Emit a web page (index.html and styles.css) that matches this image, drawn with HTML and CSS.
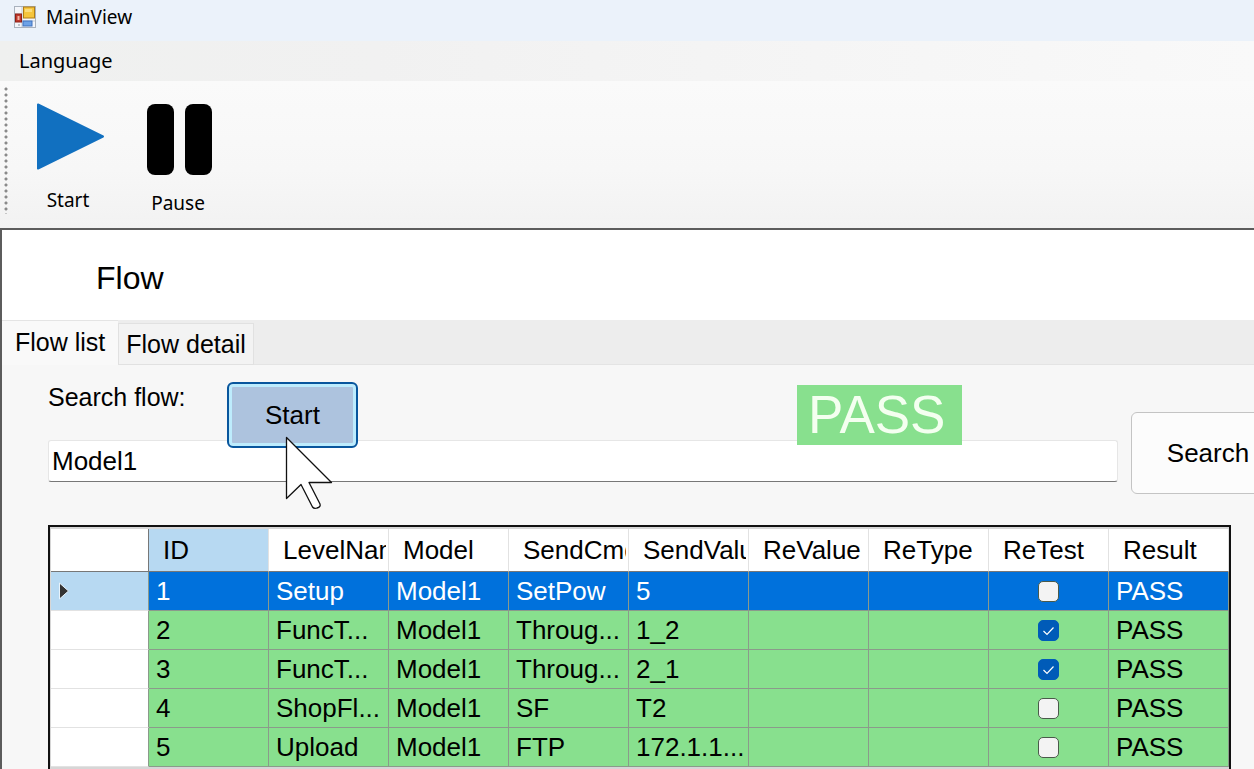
FILE: index.html
```html
<!DOCTYPE html>
<html lang="en">
<head>
<meta charset="utf-8">
<title>MainView</title>
<link rel="stylesheet" href="styles.css">
</head>
<body>
<header class="titlebar">
  <svg class="app-icon" width="22" height="22" viewBox="0 0 22 22" aria-hidden="true">
    <rect x="0.5" y="0.5" width="21" height="21" fill="#f4f6fa" stroke="#a9b2bd"/>
    <path d="M8 1v20M1 8h7M1 15h20" stroke="#c3cad3" fill="none"/>
    <rect x="1.5" y="8" width="6" height="8" fill="#c0392b" stroke="#8e2016"/>
    <rect x="3.5" y="10" width="2" height="4" fill="#f3b4a4"/>
    <rect x="9.5" y="1" width="11" height="11" fill="#f5c53c" stroke="#b07d16"/>
    <path d="M11 3h7v3h-7z" fill="#fbdc78"/>
    <rect x="9" y="15" width="9" height="5" fill="#6da2e6" stroke="#3e70bd"/>
    <path d="M5 18v2" stroke="#8a93a0"/>
  </svg>
  <span>MainView</span>
</header>
<nav class="menubar"><button class="menu-item" type="button">Language</button></nav>
<div class="toolbar">
  <span class="grip"></span>
  <button class="tool tool-start" type="button">
    <svg width="68" height="68" viewBox="0 0 68 68" aria-hidden="true"><path d="M4 2.500L69 34.500L4 66.500Z" fill="#1170c0" stroke="#1170c0" stroke-width="2" stroke-linejoin="round"/></svg>
    <span>Start</span>
  </button>
  <button class="tool tool-pause" type="button">
    <svg width="68" height="72" viewBox="0 0 68 72" aria-hidden="true"><rect x="3" y="1" width="27" height="71" rx="8"/><rect x="41" y="1" width="27" height="71" rx="8"/></svg>
    <span>Pause</span>
  </button>
</div>
<main class="panel">
  <h1 class="panel-title">Flow</h1>
  <div class="tabs" role="tablist">
    <button class="tab tab-active" role="tab" aria-selected="true" type="button">Flow list</button>
    <button class="tab" role="tab" aria-selected="false" type="button">Flow detail</button>
  </div>
  <section class="page">
    <label class="search-label" for="search">Search flow:</label>
    <div class="search-row">
      <input class="search-input" id="search" type="text" value="Model1">
      <button class="search-button" type="button">Search</button>
    </div>
    <button class="start-button" type="button">Start</button>
    <div class="verdict">PASS</div>
    <svg class="cursor" width="48" height="74" viewBox="0 0 48 74" aria-hidden="true"><path d="M1.500 1.500V62.500L16 48.500L27.500 71Q29 73 32 72Q36 71 35 68L24 46.500H46.500Z" fill="#fff" stroke="#111" stroke-width="1.300" stroke-linejoin="round"/></svg>
    <div class="grid">
      <table class="flow-table">
        <colgroup><col class="col-marker"><col span="9"></colgroup>
        <thead>
          <tr><th class="marker"></th><th class="sorted"><span>ID</span></th><th><span>LevelName</span></th><th><span>Model</span></th><th><span>SendCmd</span></th><th><span>SendValue</span></th><th><span>ReValue</span></th><th><span>ReType</span></th><th><span>ReTest</span></th><th><span>Result</span></th></tr>
        </thead>
        <tbody>
          <tr class="selected"><td class="marker"><svg width="10" height="18" viewBox="0 0 10 18" aria-hidden="true"><path d="M0.500 1L9.500 9L0.500 17Z" fill="#333" stroke="#e8f3fb"/></svg></td><td>1</td><td>Setup</td><td>Model1</td><td>SetPow</td><td>5</td><td></td><td></td><td class="check"><input type="checkbox" aria-label="ReTest 1"></td><td>PASS</td></tr>
          <tr><td class="marker"></td><td>2</td><td>FuncT...</td><td>Model1</td><td>Throug...</td><td>1_2</td><td></td><td></td><td class="check"><input type="checkbox" aria-label="ReTest 2" checked></td><td>PASS</td></tr>
          <tr><td class="marker"></td><td>3</td><td>FuncT...</td><td>Model1</td><td>Throug...</td><td>2_1</td><td></td><td></td><td class="check"><input type="checkbox" aria-label="ReTest 3" checked></td><td>PASS</td></tr>
          <tr><td class="marker"></td><td>4</td><td>ShopFl...</td><td>Model1</td><td>SF</td><td>T2</td><td></td><td></td><td class="check"><input type="checkbox" aria-label="ReTest 4"></td><td>PASS</td></tr>
          <tr><td class="marker"></td><td>5</td><td>Upload</td><td>Model1</td><td>FTP</td><td>172.1.1...</td><td></td><td></td><td class="check"><input type="checkbox" aria-label="ReTest 5"></td><td>PASS</td></tr>
        </tbody>
      </table>
    </div>
  </section>
</main>
</body>
</html>
```
FILE: styles.css
```css
* { box-sizing: border-box; }
html, body { height: 100%; }
body {
  margin: 0;
  display: flex;
  flex-direction: column;
  overflow: hidden;
  background: #f7f7f7;
  color: #000;
  font: 26px/30px "Liberation Sans", Arial, sans-serif;
}
button, input { font: inherit; color: inherit; margin: 0; }
button { padding: 0; border: 0; background: none; }

.titlebar, .menubar, .toolbar {
  flex: none;
  font-family: "Noto Sans", "Segoe UI", sans-serif;
  font-size: 19px;
  line-height: 26px;
}
.titlebar {
  display: flex;
  align-items: center;
  gap: 10px;
  height: 41px;
  padding: 0 14px 8px;
  background: #ebf2fa;
}
.menubar {
  display: flex;
  height: 40px;
  padding-left: 19px;
  background: linear-gradient(90deg, #eff0ef 0%, #f1f1f1 30%, #f9f9f9 100%);
}
.menu-item { font-size: 20px; }
.toolbar {
  display: flex;
  align-items: flex-start;
  height: 147px;
  padding: 6px 4px;
  background: linear-gradient(#fafafa, #f7f7f7 60%, #f2f2f2);
}
.grip {
  width: 4px;
  height: 127px;
  background: radial-gradient(circle at 2px 2px, #8a8a8a 1px, transparent 2px) 0 0 / 4px 6px;
}
.tool { display: flex; flex-direction: column; align-items: center; }
.tool svg { overflow: visible; }
.tool-start { margin: 15px 0 0 26px; gap: 17px; }
.tool-pause { margin: 16px 0 0 42px; gap: 15px; }

.panel {
  flex: 1;
  display: flex;
  flex-direction: column;
  min-height: 0;
  border-top: 2px solid #5c5c5c;
  border-left: 2px solid #5c5c5c;
  background: #fff;
}
.panel-title {
  margin: 0;
  padding: 30px 0 24px 94px;
  font-size: 32px;
  font-weight: 400;
  line-height: 36px;
}
.tabs {
  display: flex;
  flex: none;
  height: 45px;
  border-bottom: 1px solid #e4e4e4;
  background: #ededed;
  font-size: 25px;
}
.tab {
  height: 42px;
  margin-top: 3px;
  padding: 0 7px;
  border: 1px solid #e1e1e1;
  background: #f3f3f3;
}
.tab-active {
  height: 45px;
  margin-top: 0;
  padding: 0 13px 3px;
  border: 0;
  border-top: 1px solid #e4e4e4;
  background: #f9f9f9;
}
.page {
  position: relative;
  flex: 1;
  display: flex;
  flex-direction: column;
  min-height: 0;
  padding: 17px 23px 0 46px;
  background: #f7f7f7;
}
.search-label { align-self: flex-start; font-size: 25px; }
.search-row { display: flex; align-items: center; gap: 13px; margin-right: -54px; }
.search-input {
  flex: 1;
  min-width: 0;
  height: 42px;
  margin-top: 16px;
  padding: 0 3px;
  border: 1px solid #e6e6e6;
  border-bottom-color: #777;
  border-radius: 3px;
  background: #fff;
  outline: 0;
}
.search-button {
  width: 154px;
  height: 82px;
  border: 1px solid #c4c4c4;
  border-radius: 6px;
  background: #fcfcfc;
}
.start-button {
  position: absolute;
  left: 225px;
  top: 17px;
  width: 131px;
  height: 66px;
  border: 2px solid #08569d;
  border-radius: 6px;
  background: #adc3de;
  box-shadow: inset 0 0 0 3px #bdecfd;
}
.verdict {
  position: absolute;
  left: 795px;
  top: 20px;
  padding: 0 17px 0 11px;
  background: #88e08e;
  color: #f4fff0;
  font-size: 53px;
  line-height: 60px;
}
.cursor { position: absolute; left: 283px; top: 71px; }

.grid {
  flex: 1;
  min-height: 0;
  margin-top: 31px;
  padding-top: 2px;
  padding-left: 1px;
  border: 2px solid #111;
  border-bottom: 0;
  background: #d6d6d6;
  overflow: hidden;
}
.flow-table {
  width: 100%;
  table-layout: fixed;
  border-collapse: separate;
  border-spacing: 0;
  background: #fff;
}
.col-marker { width: 98px; }
.flow-table th, .flow-table td {
  padding: 0 7px;
  text-align: left;
  font-weight: 400;
  white-space: nowrap;
  border-right: 1px solid #8b9a8b;
  border-bottom: 1px solid #8b9a8b;
}
.flow-table td { height: 39px; background: #88e08e; }
.flow-table th {
  height: 43px;
  padding: 0 2px 0 14px;
  background: #fff;
  border-right-color: #e2e2e2;
  border-bottom-color: #777;
}
.flow-table th span { display: block; overflow: hidden; }
.flow-table th.sorted { background: #b7d9f2; }
.flow-table th.marker { border-right-color: #777; }
.flow-table td.marker {
  padding-left: 8px;
  background: #fff;
  border-right-color: #8b9a8b;
  border-bottom-color: #e2e2e2;
}
.flow-table td.marker svg { display: block; }
.flow-table .selected td { background: #0071dc; color: #fff; }
.flow-table .selected td.marker { background: #b7d9f2; }
.flow-table td.check { padding: 0; text-align: center; }
.check input {
  appearance: none;
  display: block;
  width: 21px;
  height: 21px;
  margin: 0 auto;
  border: 1px solid #4a5a4a;
  border-radius: 5px;
  background: #f3f3f3;
}
.check input:checked {
  border-color: #005bb8;
  background: #005bb8 url("data:image/svg+xml,%3Csvg xmlns='http://www.w3.org/2000/svg' viewBox='0 0 19 19'%3E%3Cpath d='M4.500 10L8 13.500L14.500 6.500' fill='none' stroke='%23fff' stroke-width='1.200'/%3E%3C/svg%3E") center / 100% no-repeat;
}
```
